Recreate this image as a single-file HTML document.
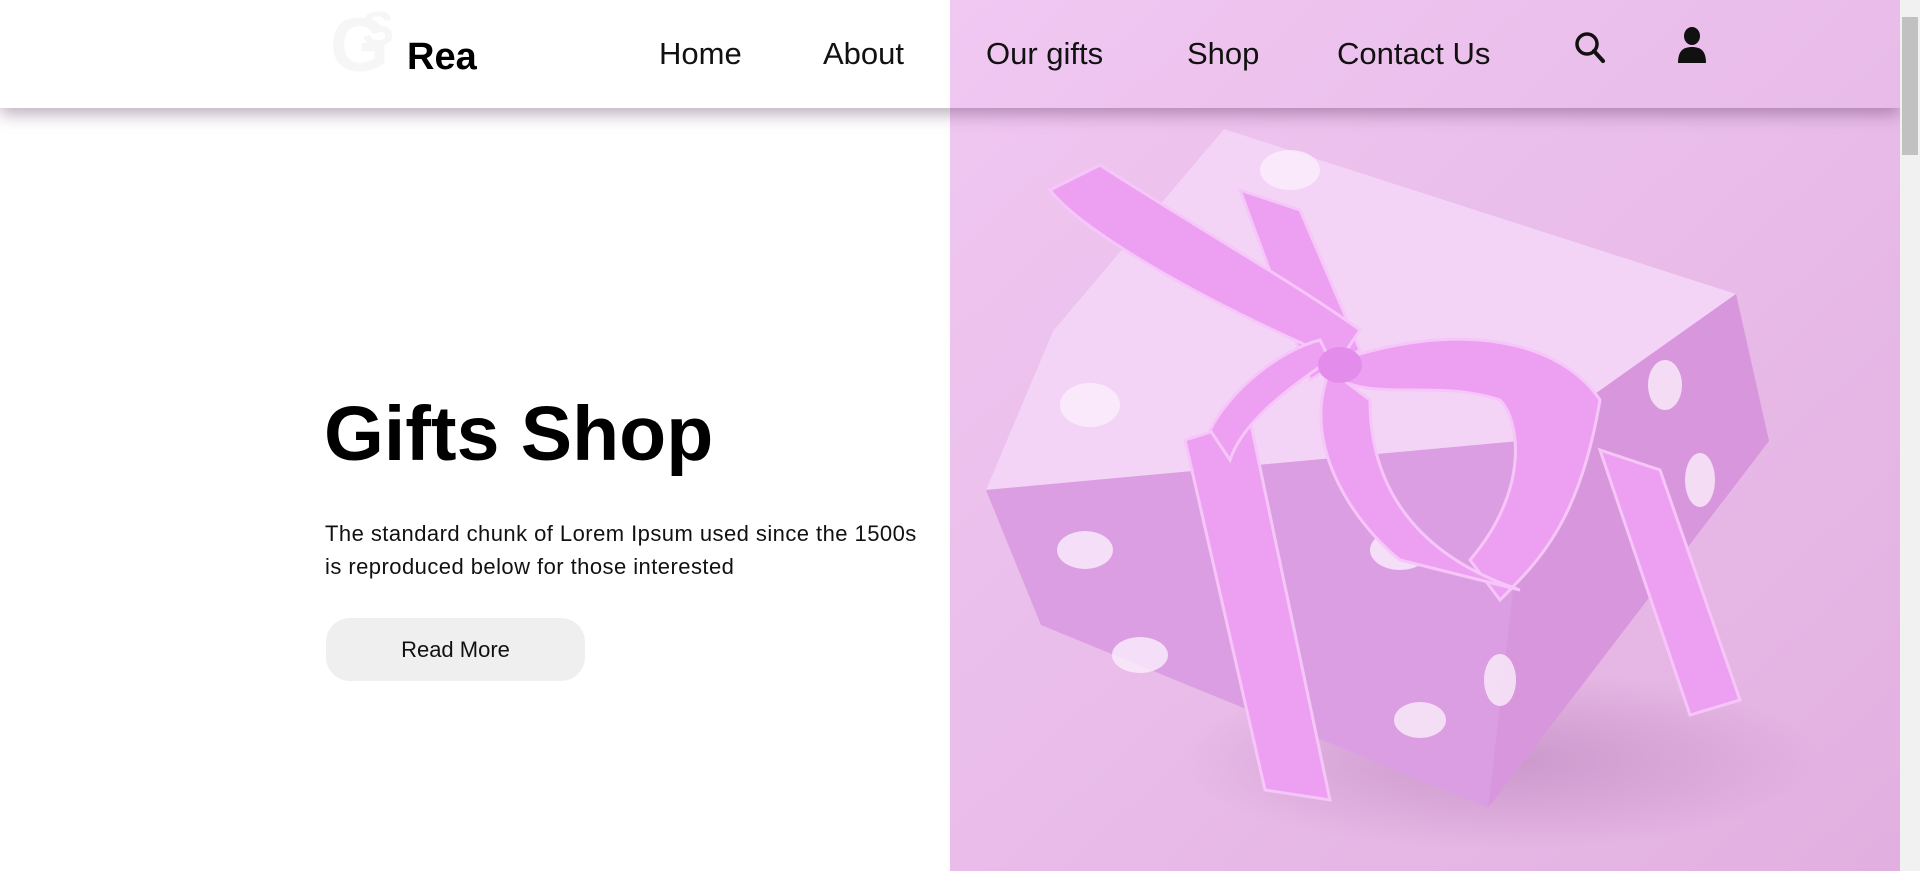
<!DOCTYPE html>
<html><head><meta charset="utf-8"><style>
*{margin:0;padding:0;box-sizing:border-box}
body{width:1920px;height:871px;overflow:hidden;background:#fff;font-family:"Liberation Sans",sans-serif;position:relative}
.img{position:absolute;left:950px;top:0;width:950px;height:871px;overflow:hidden}
.hdr{position:absolute;left:0;top:0;width:1900px;height:108px;box-shadow:0 6px 16px rgba(60,20,60,.35);z-index:2}
.hdrw{position:absolute;left:0;top:0;width:950px;height:108px;background:#fff}
.nav a{position:absolute;top:36px;font-size:31px;color:#111;text-decoration:none;white-space:nowrap}
.sb{position:absolute;left:1900px;top:0;width:20px;height:871px;background:#f1f1f1;z-index:3}
.sb div{position:absolute;left:2px;top:17px;width:16px;height:138px;background:#c1c1c1}
h1{position:absolute;left:324px;top:390px;font-size:77px;font-weight:bold;color:#000;white-space:nowrap}
p{position:absolute;left:325px;top:517px;font-size:22px;line-height:33px;color:#111;width:605px;letter-spacing:.45px}
.btn{position:absolute;left:326px;top:618px;width:259px;height:63px;border-radius:24px;background:#efefef;font-size:22px;text-align:center;line-height:63px;color:#111}
</style></head><body>
<div class="img"><svg width="950" height="871" viewBox="950 0 950 871">
<defs><linearGradient id="bg" x1="0" y1="0" x2="1" y2="1"><stop offset="0" stop-color="#f0c8f2"/><stop offset="1" stop-color="#e2b0e0"/></linearGradient>
<radialGradient id="sh" cx=".5" cy=".5" r=".5"><stop offset="0" stop-color="#b07ab0" stop-opacity=".5"/><stop offset="1" stop-color="#b07ab0" stop-opacity="0"/></radialGradient></defs>
<rect x="950" y="0" width="950" height="871" fill="url(#bg)"/>
<ellipse cx="1500" cy="760" rx="320" ry="90" fill="url(#sh)"/>
<polygon points="1224,129 1736,294 1769,441 1488,808 1041,625 986,490 1053,331" fill="#e6aee9"/>
<polygon points="1224,129 1736,294 1530,440 986,490 1053,331" fill="#f4d4f6"/>
<polygon points="986,490 1530,440 1488,808 1041,625" fill="#dc9ee2"/>
<polygon points="1530,440 1736,294 1769,441 1488,808" fill="#d896dc"/>
<g fill="#fbeefc" opacity=".8"><ellipse cx="1090" cy="405" rx="30" ry="22"/><ellipse cx="1085" cy="550" rx="28" ry="19"/><ellipse cx="1140" cy="655" rx="28" ry="18"/><ellipse cx="1290" cy="170" rx="30" ry="20"/><ellipse cx="1700" cy="480" rx="15" ry="27"/><ellipse cx="1665" cy="385" rx="17" ry="25"/><ellipse cx="1500" cy="680" rx="16" ry="26"/><ellipse cx="1420" cy="720" rx="26" ry="18"/><ellipse cx="1400" cy="550" rx="30" ry="20"/></g>
<g fill="#eda0f2" stroke="#f6c6f8" stroke-width="3">
<polygon points="1185,440 1250,420 1330,800 1265,790"/>
<polygon points="1240,190 1300,210 1360,350 1310,380"/>
<path d="M1340,360 C1200,300 1080,230 1050,190 L1100,165 C1200,230 1290,280 1360,330 Z"/>
<path d="M1340,360 C1460,320 1560,340 1600,400 C1580,520 1540,560 1500,600 L1470,560 C1530,490 1520,420 1500,400 C1440,380 1380,400 1340,380 Z"/>
<path d="M1330,370 C1300,440 1350,520 1400,560 L1520,590 C1430,560 1370,500 1370,400 Z"/>
<polygon points="1600,450 1660,470 1740,700 1690,715"/>
<path d="M1330,360 C1270,400 1240,430 1230,460 L1210,430 C1230,390 1280,350 1320,340 Z"/>
</g>
<ellipse cx="1340" cy="365" rx="22" ry="18" fill="#e48cec"/>
</svg></div>
<div class="hdr"><div class="hdrw"></div></div>
<div style="position:absolute;z-index:3;left:330px;top:6px;font-size:76px;font-weight:bold;color:#f6f6f6;line-height:80px">G</div>
<div style="position:absolute;z-index:3;left:362px;top:2px;font-size:48px;font-weight:bold;color:#f6f6f6">S</div>
<div style="position:absolute;z-index:4;left:407px;top:36px;font-size:38px;font-weight:bold;color:#000">Rea</div>
<div class="nav" style="position:absolute;z-index:4;left:0;top:0">
<a style="left:659px">Home</a><a style="left:823px">About</a><a style="left:986px">Our gifts</a><a style="left:1187px">Shop</a><a style="left:1337px">Contact Us</a></div>
<svg style="position:absolute;z-index:4;left:1574px;top:30px" width="34" height="34" viewBox="0 0 34 34"><circle cx="13" cy="14" r="10" fill="none" stroke="#111" stroke-width="3.5"/><line x1="20" y1="21" x2="29" y2="31" stroke="#111" stroke-width="4" stroke-linecap="round"/></svg>
<svg style="position:absolute;z-index:4;left:1677px;top:27px" width="30" height="36" viewBox="0 0 30 36"><ellipse cx="15" cy="9" rx="8" ry="9" fill="#111"/><path d="M1,36 C1,24 6,20 15,20 C24,20 29,24 29,36 Z" fill="#111"/></svg>
<h1>Gifts Shop</h1>
<p>The standard chunk of Lorem Ipsum used since the 1500s is reproduced below for those interested</p>
<div class="btn">Read More</div>
<div class="sb"><div></div></div>
</body></html>
